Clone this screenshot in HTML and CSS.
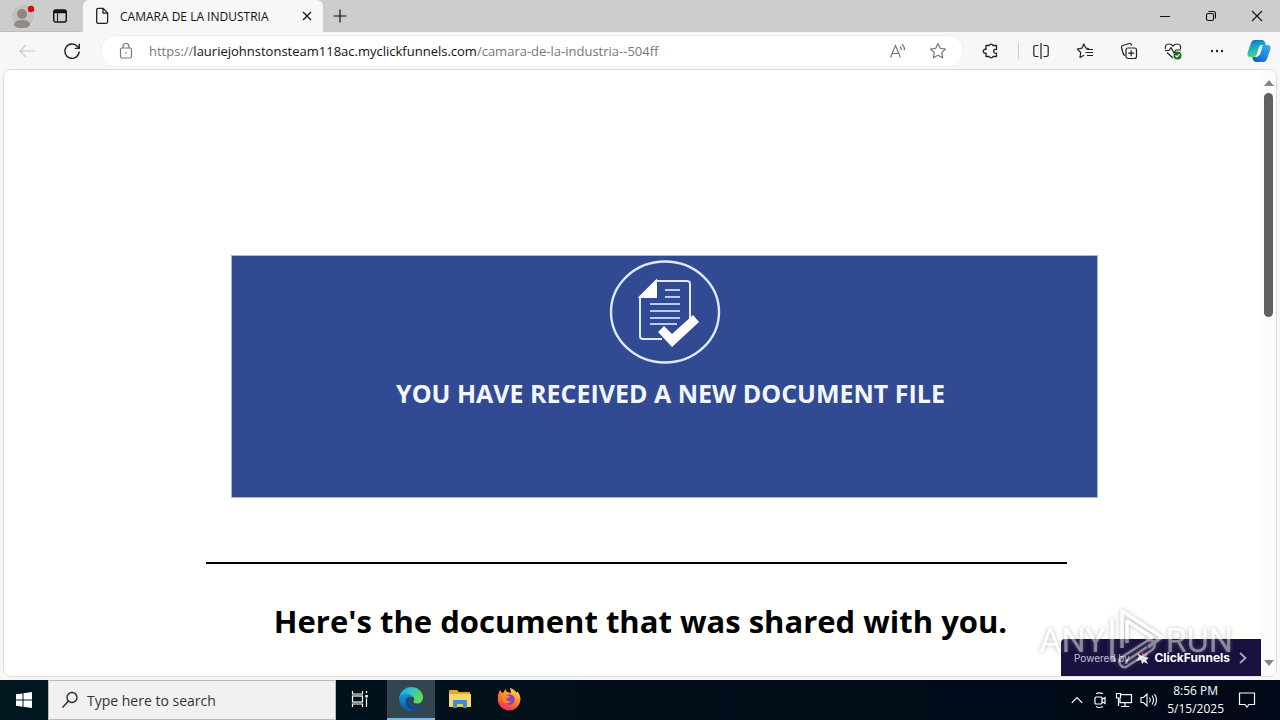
FILE: index.html
```html
<!DOCTYPE html>
<html lang="en">
<head>
<meta charset="utf-8">
<title>CAMARA DE LA INDUSTRIA</title>
<link rel="stylesheet" href="styles.css">
</head>
<body>
<header class="tabbar">
  <div class="tab-tools">
    <button class="icon-btn profile" aria-label="Profile">
      <svg width="24" height="26" viewBox="0 0 24 26"><circle cx="12" cy="13" r="11" fill="#c3c0be"/><circle cx="11" cy="11" r="5" fill="#8a8785"/><path d="M3 22c0-4 4-5 8-5s8 1 8 5c-2 3-5 3-8 3s-6 0-8-3z" fill="#8f8c8a"/><circle cx="20" cy="6" r="3.2" fill="#d90b0b"/></svg>
    </button>
    <button class="icon-btn" aria-label="Tab actions">
      <svg width="16" height="16" viewBox="0 0 16 16" fill="none" stroke="#111"><rect x="1.7" y="2" width="12.6" height="12" rx="2" stroke-width="1.4"/><path d="M2 3.7h12" stroke-width="3"/><path d="M5.5 4v10"/></svg>
    </button>
  </div>
  <div class="tab">
    <svg width="14" height="18" viewBox="0 0 14 18" fill="none" stroke="#222" stroke-width="1.3"><path d="M1.7 2.7q0-1.4 1.3-1.4h5.2l4.4 4.6v8.9q0 1.5-1.4 1.5H3q-1.3 0-1.3-1.5zM8 1.5v4.7h4.5"/></svg>
    <span class="tab-title">CAMARA DE LA INDUSTRIA</span>
    <button class="icon-btn tab-close" aria-label="Close tab"><svg width="10" height="10" viewBox="0 0 10 10" stroke="#111" stroke-width="1.2"><path d="M1 1l8 8M9 1L1 9"/></svg></button>
  </div>
  <button class="icon-btn new-tab" aria-label="New tab"><svg width="16" height="16" viewBox="0 0 16 16" stroke="#111" stroke-width="1.2"><path d="M8 1.500v13M1.500 8h13"/></svg></button>
  <div class="window-controls">
    <button class="icon-btn" aria-label="Minimize"><svg width="10" height="10" viewBox="0 0 10 10" stroke="#111"><path d="M0 5.500h10"/></svg></button>
    <button class="icon-btn" aria-label="Restore"><svg width="12" height="12" viewBox="0 0 12 12" fill="none" stroke="#111" stroke-width="1.100"><rect x="1.500" y="3.500" width="7" height="7" rx="1.500"/><path d="M3.500 1.500h5q2 0 2 2v5"/></svg></button>
    <button class="icon-btn" aria-label="Close"><svg width="12" height="12" viewBox="0 0 12 12" stroke="#111" stroke-width="1.100"><path d="M1 1l10 10M11 1L1 11"/></svg></button>
  </div>
</header>

<nav class="toolbar">
  <div class="nav-tools">
    <button class="icon-btn" aria-label="Back" disabled><svg width="18" height="16" viewBox="0 0 18 16" fill="none" stroke="#c9c9c9" stroke-width="1.200"><path d="M17 8H2M8 2L2 8l6 6"/></svg></button>
    <button class="icon-btn" aria-label="Refresh"><svg width="18" height="18" viewBox="0 0 18 18" fill="none" stroke="#222" stroke-width="1.400"><path d="M16.200 9.500A7.200 7.200 0 1 1 14.500 4.500L16.300 6.300M16.300 1.800v4.600h-4.600"/></svg></button>
  </div>
  <div class="address">
    <svg width="14" height="18" viewBox="0 0 14 18" fill="none" stroke="#777" stroke-width="1.200"><rect x="1.500" y="6" width="11" height="10" rx="1.500"/><path d="M4 6V4.500a3 3 0 0 1 6 0V6"/><circle cx="7" cy="11" r=".8" fill="#777" stroke="none"/></svg>
    <span class="url">https://<b class="host">lauriejohnstonsteam118ac.myclickfunnels.com</b>/camara-de-la-industria--504ff</span>
    <button class="icon-btn" aria-label="Read aloud"><svg width="18" height="16" viewBox="0 0 18 16" fill="none" stroke="#777" stroke-width="1.200"><path d="M1.500 14.500L6.500 2.500l5 12M3.200 10.500h6.600M11 3.500q1.500 1.300 1.400 3.500M13 1.300q2.800 2.400 2.500 6"/></svg></button>
    <button class="icon-btn" aria-label="Favorite"><svg width="18" height="18" viewBox="0 0 18 18" fill="none" stroke="#777" stroke-width="1.200" stroke-linejoin="round"><path d="M9 1.500l2.300 4.800 5.200.7-3.800 3.600.9 5.200L9 13.300l-4.600 2.500.9-5.200L1.500 7l5.200-.7z"/></svg></button>
  </div>
  <div class="ext-tools">
    <button class="icon-btn extensions" aria-label="Extensions"><svg width="18" height="18" viewBox="0 0 18 18" fill="none" stroke="#222" stroke-width="1.300" stroke-linejoin="round"><path d="M4 3.500h3.200a2 2 0 0 1 3.800 0h3.500v4a2 2 0 1 0 0 3.600v3.400H11a2 2 0 0 1-3.800 0H4v-3.400a2 2 0 1 1 0-3.700z"/></svg></button>
    <span class="divider"></span>
    <button class="icon-btn" aria-label="Split screen"><svg width="18" height="18" viewBox="0 0 18 18" fill="none" stroke="#222" stroke-width="1.200"><path d="M9 1v16M6.500 3.500h-3q-1.700 0-1.700 1.700v7.600q0 1.700 1.700 1.700h3M11.500 3.500h3q1.700 0 1.700 1.700v7.600q0 1.700-1.700 1.700h-3"/></svg></button>
    <button class="icon-btn" aria-label="Favorites"><svg width="18" height="18" viewBox="0 0 18 18" fill="none" stroke="#222" stroke-width="1.200" stroke-linejoin="round"><path d="M13 6.500l-3-.3L7.800 2 6 6.200l-4.700.8 3.400 3.500L4 15.500l4-2.300M10.500 7.500H17M9.500 10.500H17M11 13.500h6"/></svg></button>
    <button class="icon-btn" aria-label="Collections"><svg width="18" height="18" viewBox="0 0 18 18" fill="none" stroke="#222" stroke-width="1.200"><rect x="6" y="6" width="10.500" height="10.500" rx="2"/><path d="M11.200 8.200v6M8.200 11.200h6M5 13.500Q3.500 13 3 11L1.500 5.500Q1.200 4 2.700 3.500L9.500 1.500Q11 1.300 11.800 3.500"/></svg></button>
    <button class="icon-btn" aria-label="Browser essentials"><svg width="18" height="18" viewBox="0 0 18 18" fill="none" stroke="#222" stroke-width="1.200" stroke-linejoin="round"><path d="M1.500 7Q.5 2 5 2q2.500 0 4 2.200Q10.500 2 13 2q4.500 0 3.500 5M3 10.500L9 16M1 8.500h4l2-3 3 5.500 2-3h5"/><circle cx="13.500" cy="13.500" r="4" fill="#16701d" stroke="none"/><path d="M11.500 13.500l1.500 1.400 2.600-2.800" stroke="#fff"/></svg></button>
    <button class="icon-btn" aria-label="Settings and more"><svg width="16" height="6" viewBox="0 0 16 6" fill="#222"><circle cx="3" cy="3" r="1.200"/><circle cx="8" cy="3" r="1.200"/><circle cx="13" cy="3" r="1.200"/></svg></button>
    <button class="icon-btn copilot" aria-label="Copilot"><svg width="24" height="24" viewBox="0 0 24 24"><defs><linearGradient id="cpA" x1="0" y1="0" x2=".3" y2="1"><stop offset="0" stop-color="#1762c9"/><stop offset=".5" stop-color="#1aabc4"/><stop offset="1" stop-color="#55cf85"/></linearGradient><linearGradient id="cpB" x1="1" y1="0" x2="0" y2="1"><stop offset="0" stop-color="#39b5ef"/><stop offset="1" stop-color="#0755d4"/></linearGradient></defs><path d="M7 1h8q2 0 2.800 2l1 3h-4q-2 0-2.700 2L9.500 16q-.6 2-2.500 2H3q-3 0-2.500-4L4 4q1-3 3-3z" fill="url(#cpA)"/><path d="M17 23H9q-2 0-2.800-2l-1-3h4q2 0 2.700-2l2.600-8q.6-2 2.500-2h4q3 0 2.500 4L20 20q-1 3-3 3z" fill="url(#cpB)"/><path d="M13.500 8h2l-2.500 7.500q-.4 1-1.400 1H9.800q.9-.3 1.300-1.500z" fill="#f7f7f7"/></svg></button>
  </div>
</nav>

<main class="page">
  <article class="content">
    <section class="banner">
      <svg class="banner-icon" width="112" height="104" viewBox="0 0 112 104" fill="none" stroke="#dfe9ff" stroke-width="2"><ellipse cx="56" cy="52" rx="54" ry="50.500" stroke-width="2.400"/><path d="M47 21h31q3 0 3 3v38M53 79H34q-3 0-3-3V37l16-16"/><path d="M31 37L47 21v16z" fill="#fff" stroke="#fff"/><path d="M56 30h15M56 37h15M41 44h30M41 51h30M41 58h30M41 64h27" stroke="#b9cdf8" stroke-width="1.800"/><path d="M49 72l6-6 8 8 21-19 6 7-27 25z" fill="#fff" stroke="none"/></svg>
      <h1 class="banner-title">YOU HAVE RECEIVED A NEW DOCUMENT FILE</h1>
    </section>
    <hr class="rule">
    <h2 class="headline">Here's the document that was shared with you.</h2>
  </article>
  <div class="scrollbar" aria-hidden="true">
    <svg width="10" height="6" viewBox="0 0 10 6"><path d="M5 0l5 6H0z" fill="#858585"/></svg>
    <div class="track"><div class="thumb"></div></div>
    <svg width="10" height="6" viewBox="0 0 10 6"><path d="M5 6L0 0h10z" fill="#858585"/></svg>
  </div>
  <a class="badge" href="#">
    <span class="badge-by">Powered by</span>
    <svg width="14" height="14" viewBox="0 0 14 14"><path d="M1 2l5 3V1l2 3 4-2-2 4 3 1-3 2 2 4-4-2-2 2-1-4-5 1 3-4z" fill="#eef"/><path d="M6 1l2 3 4-2-2 4-4-1z" fill="#d9364f"/></svg>
    <span class="badge-name">ClickFunnels</span>
    <svg width="10" height="14" viewBox="0 0 10 14" fill="none" stroke="#a9a4cc" stroke-width="1.800"><path d="M2 2l5.500 5L2 12"/></svg>
  </a>
  <div class="watermark">
    <span>ANY</span>
    <svg width="58" height="64" viewBox="0 0 58 64" fill="none" stroke="#fff" stroke-width="3.500" stroke-linejoin="round"><path d="M15 40V3l40 26-14 10"/><path d="M5 10v38q0 4 4 4M20 13v22M20 13l25 16-5 4"/><path d="M40 33L15 49q-4 3-2 7t6 3l26-17q4-3 2-7t-7-2zM18 54l22-15" stroke-width="2.500"/></svg>
    <span>RUN</span>
  </div>
</main>

<footer class="taskbar">
  <button class="icon-btn start" aria-label="Start"><svg width="16" height="16" viewBox="0 0 16 16" fill="#fff"><path d="M0 2.300L6.500 1.400v6.200H0zM7.500 1.200L16 0v7.600H7.500zM0 8.500h6.500v6.200L0 13.800zM7.500 8.500H16V16l-8.500-1.200z"/></svg></button>
  <label class="search">
    <svg width="18" height="18" viewBox="0 0 18 18" fill="none" stroke="#222" stroke-width="1.300"><circle cx="11" cy="6.500" r="5"/><path d="M7.500 10L1.500 16.500"/></svg>
    <input class="search-input" type="text" placeholder="Type here to search" aria-label="Type here to search">
  </label>
  <div class="apps">
    <button class="icon-btn app" aria-label="Task view"><svg width="18" height="18" viewBox="0 0 18 18" fill="none" stroke="#fff" stroke-width="1.200"><path d="M1.500 1v3h10V1M1.500 17v-3h10v3M15.500 1v2M15.500 8.500V17"/><rect x="1.500" y="6" width="10" height="6"/><path d="M14.300 5h2.500v2.500h-2.500z" fill="#fff" stroke="none"/></svg></button>
    <button class="icon-btn app active" aria-label="Microsoft Edge"><svg width="24" height="24" viewBox="0 0 24 24"><defs><linearGradient id="eg1" x1="0" y1="0" x2="1" y2=".4"><stop offset="0" stop-color="#2199d9"/><stop offset=".5" stop-color="#2fc4c4"/><stop offset="1" stop-color="#62d85a"/></linearGradient><linearGradient id="eg2" x1="0" y1="0" x2="0" y2="1"><stop offset="0" stop-color="#1796dc"/><stop offset="1" stop-color="#0c59a4"/></linearGradient></defs><path d="M.2 11A12 12 0 0 1 12 0c7 0 12 5 12 10.500 0 4-3 6-6 6-2.500 0-4-1-3.500-2 1.700-2 .5-6-4.500-6C5 8.500.5 10 .2 11z" fill="url(#eg1)"/><path d="M.2 10.500C2 5.500 12 5.500 14 10c-4-.8-5 2-4 5 1.500 4.500 7 6 11.500 3.500.8-.3 1 .1.600.7A12 12 0 0 1 12 24C5 24-.5 18 .2 10.500z" fill="url(#eg2)"/><path d="M9 9.800c-4 3-3 11 5 13.600 4-.4 7-2.400 8.200-4.700-6 3-13 .3-12.600-5.700 0-1.500.7-2.600 1.400-3.200z" fill="#114a8b"/></svg></button>
    <button class="icon-btn app" aria-label="File Explorer"><svg width="22" height="20" viewBox="0 0 22 20"><path d="M0 2q0-1 1-1h7l2 2h11v15H0z" fill="#e6a52c"/><path d="M0 5h22v13H0z" fill="#fbd66b"/><path d="M4 19v-8h14v8h-4v-4H8v4z" fill="#3a91cf"/><path d="M8 15h6v3H8z" fill="#f2c557"/></svg></button>
    <button class="icon-btn app" aria-label="Firefox"><svg width="24" height="24" viewBox="0 0 24 24"><defs><linearGradient id="ff" x1=".8" y1="0" x2=".3" y2="1"><stop offset="0" stop-color="#ffe14d"/><stop offset=".45" stop-color="#ff8b25"/><stop offset="1" stop-color="#f02763"/></linearGradient></defs><path d="M3 3l2 3 2-1 1-3 2 3 4 1-1-5c4 1 6 4 7 5V4c3 3 3.500 6 3.400 9A11.200 11.200 0 0 1 12 23.500 11.200 11.200 0 0 1 .8 12C.8 8 2 5 3 3z" fill="url(#ff)"/><circle cx="12.500" cy="12.500" r="5.200" fill="#8a3fd0"/><path d="M5 9c3-2 5 0 8 0-1 2-3 1.500-4 3.500 1 1.500 3 2 5 1-1 3-5 4-8 1z" fill="#ff8a20"/></svg></button>
  </div>
  <div class="tray">
    <svg width="12" height="8" viewBox="0 0 12 8" fill="none" stroke="#fff" stroke-width="1.200"><path d="M.8 6.800L6 1.500l5.200 5.300"/></svg>
    <svg width="18" height="18" viewBox="-3 0 18 18" fill="none" stroke="#fff" stroke-width="1.200"><rect x="2" y="6" width="7" height="7" rx="1"/><path d="M9 8.500l3-2v6l-3-2M3 2.800q3.500-2 7 0M3 15.500q3.500 2 7 0"/></svg>
    <svg width="18" height="16" viewBox="0 0 18 16" fill="none" stroke="#fff" stroke-width="1.200"><path d="M6 2.600h10.500v8H5V7M6 14.500h8M10 11v3.500M1.500 1.500h4V6h-4zM3.500 6v8"/></svg>
    <svg width="18" height="16" viewBox="0 0 18 16" fill="none" stroke="#fff" stroke-width="1.100"><path d="M1 5.500h2.500L7 2v12L3.500 10.500H1zM9.500 5.500q1.500 2.500 0 5M12 3.500q3 4.500 0 9M14.500 2q4 6 0 12"/></svg>
    <div class="clock"><time>8:56 PM</time><time>5/15/2025</time></div>
    <svg width="18" height="18" viewBox="0 0 18 18" fill="none" stroke="#fff" stroke-width="1.200"><path d="M1.500 2h15v11.500h-5.500L9 16l-2-2.500H1.500z"/></svg>
  </div>
</footer>
</body>
</html>
```
FILE: styles.css
```css
* { box-sizing: border-box; }
body {
  margin: 0;
  height: 100vh;
  display: flex;
  flex-direction: column;
  overflow: hidden;
  background: #f7f7f7;
  color: #111;
  font-family: "Open Sans", "Noto Sans", sans-serif;
}
svg { display: block; flex: none; }
.icon-btn {
  display: flex;
  align-items: center;
  justify-content: center;
  flex: none;
  padding: 0;
  border: 0;
  background: none;
}

.tabbar { display: flex; height: 32px; background: #cdcdcd; }
.tab-tools {
  display: flex;
  align-items: center;
  gap: 17px;
  width: 83px;
  padding-left: 11px;
  border-bottom: 1px solid #bdbdbd;
  border-radius: 0 0 6px 0;
}
.tab {
  display: flex;
  align-items: center;
  width: 240px;
  padding: 0 10px 0 12px;
  background: #f7f7f7;
  border-radius: 6px 6px 0 0;
}
.tab-title { flex: 1; margin-left: 11px; font-size: 12px; white-space: nowrap; }
.tab-close { width: 12px; height: 20px; }
.new-tab { width: 34px; }
.window-controls { display: flex; margin-left: auto; }
.window-controls .icon-btn { width: 46px; }

.toolbar { display: flex; align-items: center; height: 37px; }
.nav-tools { display: flex; gap: 27px; width: 100px; padding-left: 18px; }
.address {
  display: flex;
  align-items: center;
  flex: 1;
  height: 32px;
  padding: 0 16px 0 18px;
  background: #fff;
  border: 1px solid #eee;
  border-radius: 16px;
}
.address .icon-btn { margin-left: 22px; }
.url { flex: 1; margin-left: 16px; color: #777; font-size: 13px; white-space: nowrap; }
.host { color: #111; font-weight: 400; }
.ext-tools { display: flex; align-items: center; width: 316px; }
.ext-tools .icon-btn { width: 44px; }
.ext-tools .extensions { width: 54px; }
.ext-tools .copilot { width: 40px; }
.divider { flex: none; width: 1px; height: 16px; background: #ccc; }

.page {
  position: relative;
  display: flex;
  flex: 1;
  min-height: 0;
  margin: 0 3px 3px;
  background: #fffffd;
  border: 1px solid #ddd;
  border-radius: 8px;
  overflow: hidden;
}
.content { flex: 1; padding: 185px 194px 0 202px; }
.banner {
  display: flex;
  flex-direction: column;
  align-items: center;
  height: 243px;
  margin: 0 -31px 0 25px;
  padding-top: 4px;
  background: #324a94;
  border: 1px solid #aab6d8;
}
.banner-title {
  margin: 13px 0 0 12px;
  color: #f2f7ff;
  font-size: 25px;
  line-height: 32px;
  white-space: nowrap;
}
.rule { height: 2px; margin: 64px 0 0; border: 0; background: #000; }
.headline {
  margin: 34px 0 0;
  padding-left: 8px;
  color: #000;
  font-size: 31px;
  line-height: 46px;
  text-align: center;
  white-space: nowrap;
}
.scrollbar {
  display: flex;
  flex-direction: column;
  align-items: center;
  width: 15px;
  padding: 10px 0;
  background: #fcfcfc;
}
.track { flex: 1; width: 9px; padding: 7px 0; }
.thumb { height: 40%; background: #606060; border-radius: 5px; }

.badge {
  position: absolute;
  right: 15px;
  bottom: 0;
  display: flex;
  align-items: center;
  width: 200px;
  height: 37px;
  padding: 0 13px;
  gap: 4px;
  background: #18113f;
  border-radius: 4px 0 0 0;
  color: #fff;
  font-family: Inter, sans-serif;
  text-decoration: none;
  white-space: nowrap;
}
.badge-by { flex: 1; color: #c6c3dc; font-size: 10px; }
.badge-name { margin-right: 4px; font-size: 12px; font-weight: 700; }
.watermark {
  position: absolute;
  right: 43px;
  bottom: 4px;
  display: flex;
  align-items: center;
  gap: 1px;
  color: #fff;
  font-family: "Liberation Sans Narrow", Roboto, sans-serif;
  font-size: 34px;
  line-height: 40px;
  opacity: .5;
  filter: drop-shadow(0 0 2px #777);
  pointer-events: none;
}

.taskbar { display: flex; height: 40px; background: linear-gradient(90deg, #02161f, #020817); color: #fff; }
.start { width: 48px; }
.search {
  display: flex;
  align-items: center;
  gap: 8px;
  width: 288px;
  padding-left: 12px;
  background: #f1f1f1;
  border: 1px solid #bbb;
}
.search-input {
  flex: 1;
  min-width: 0;
  padding: 0;
  border: 0;
  background: none;
  font: 14px "Open Sans", "Noto Sans", sans-serif;
}
.search-input::placeholder { color: #333; opacity: 1; }
.apps { display: flex; gap: 1px; }
.app { width: 48px; border-bottom: 2px solid transparent; }
.app.active { margin-left: 2px; background: #33464f; border-bottom-color: #76b9ed; }
.tray { display: flex; align-items: center; gap: 7px; margin-left: auto; padding-right: 24px; }
.clock {
  display: flex;
  flex-direction: column;
  align-items: center;
  margin: 0 7px 0 2px;
  font-size: 12px;
  line-height: 18px;
  white-space: nowrap;
}
```
